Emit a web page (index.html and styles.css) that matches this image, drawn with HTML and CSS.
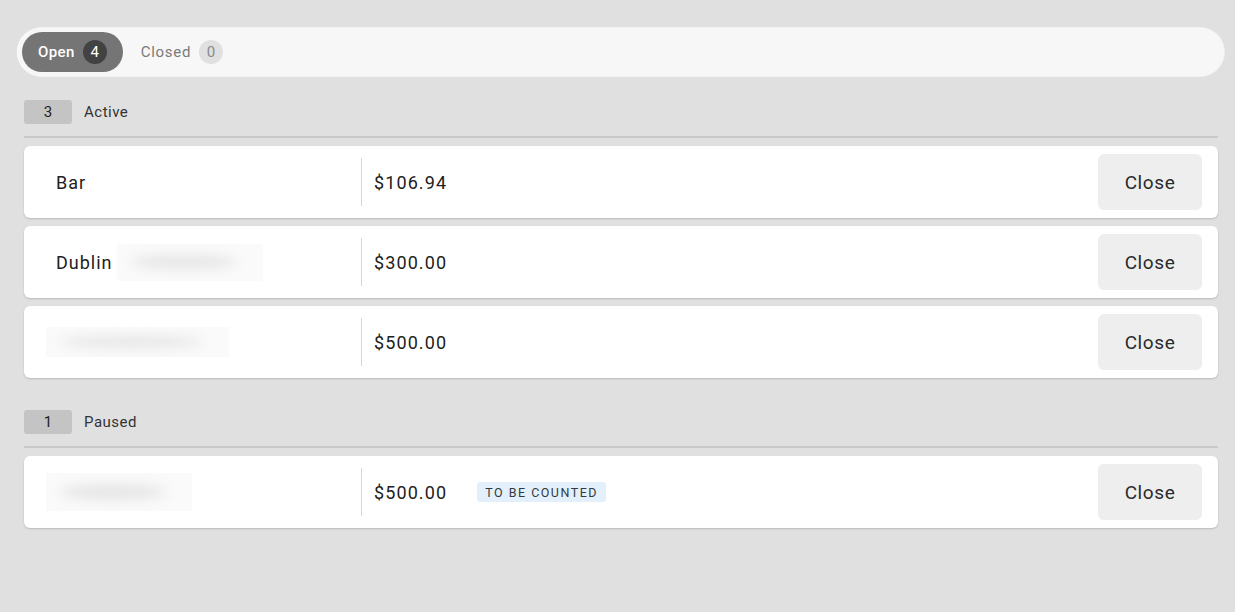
FILE: index.html
```html
<!DOCTYPE html>
<html>
<head>
<meta charset="utf-8">
<link rel="stylesheet" href="styles.css">
</head>
<body>
<div class="page">
  <div class="tabs">
    <div class="tab tab-active">Open <span class="tab-count count-dark">4</span></div>
    <div class="tab">Closed <span class="tab-count count-light">0</span></div>
  </div>

  <div class="section">
    <div class="section-head"><span class="section-count">3</span><span class="section-title">Active</span></div>
    <div class="card">
      <div class="name"><span>Bar</span></div>
      <div class="sep"></div>
      <div class="amount">$106.94</div>
      <div class="spacer"></div>
      <button class="close-btn">Close</button>
    </div>
    <div class="card">
      <div class="name"><span>Dublin</span><span class="redact redact-dublin"><span class="redact-blob"></span></span></div>
      <div class="sep"></div>
      <div class="amount">$300.00</div>
      <div class="spacer"></div>
      <button class="close-btn">Close</button>
    </div>
    <div class="card">
      <div class="name name-redacted"><span class="redact redact-wide"><span class="redact-blob"></span></span></div>
      <div class="sep"></div>
      <div class="amount">$500.00</div>
      <div class="spacer"></div>
      <button class="close-btn">Close</button>
    </div>
  </div>

  <div class="section section-second">
    <div class="section-head"><span class="section-count">1</span><span class="section-title">Paused</span></div>
    <div class="card">
      <div class="name name-redacted"><span class="redact redact-short"><span class="redact-blob"></span></span></div>
      <div class="sep"></div>
      <div class="amount">$500.00</div>
      <span class="chip">To be counted</span>
      <div class="spacer"></div>
      <button class="close-btn">Close</button>
    </div>
  </div>
</div>
</body>
</html>
```

FILE: styles.css
```css
* { box-sizing: border-box; }
html, body { margin: 0; padding: 0; }
body {
  background: #e0e0e0;
  font-family: Roboto, "Liberation Sans", Arial, sans-serif;
  color: #212121;
  width: 1235px;
  height: 612px;
  overflow: hidden;
}
.page {
  padding: 28px 11px 0 18px;
}
.tabs {
  display: flex;
  align-items: center;
  height: 48px;
  padding: 4px;
  background: #f7f7f7;
  border-radius: 24px;
  box-shadow: -1px 0 1px rgba(255,255,255,0.9), 0 0 0 1px rgba(255,255,255,0.5);
}
.tab {
  display: flex;
  align-items: center;
  height: 40px;
  padding: 0 16px 0 18px;
  font-size: 15px;
  letter-spacing: 0.7px;
  color: #7a7a7a;
  border-radius: 20px;
}
.tab-active {
  background: #757575;
  color: #ffffff;
  font-weight: 500;
  letter-spacing: 0.4px;
  padding: 0 16px;
}
.tab-count {
  display: inline-flex;
  align-items: center;
  justify-content: center;
  width: 24px;
  height: 24px;
  border-radius: 50%;
  margin-left: 8px;
  font-size: 15px;
  font-weight: 400;
  letter-spacing: 0;
}
.count-dark { background: #424242; color: #ffffff; }
.count-light { background: #e0e0e0; color: #8a8a8a; }

.section {
  margin: 24px 6px 0 6px;
}
.section-second { margin-top: 32px; }
.section-head {
  display: flex;
  align-items: center;
  height: 24px;
  position: relative;
  margin-bottom: 22px;
}
.section-head::before {
  content: "";
  position: absolute;
  left: 0; right: 0;
  top: 36px;
  height: 2px;
  background: #c9c9c9;
}
.section-count {
  display: inline-flex;
  align-items: center;
  justify-content: center;
  width: 48px;
  height: 24px;
  background: #c4c4c4;
  border-radius: 3px;
  font-size: 15px;
  color: #212121;
}
.section-title {
  margin-left: 12px;
  font-size: 15px;
  letter-spacing: 0.5px;
  color: #333333;
}

.card {
  display: flex;
  align-items: center;
  height: 72px;
  background: #ffffff;
  border-radius: 6px;
  box-shadow: 0 1px 2px rgba(0,0,0,0.18);
  padding: 0 16px 0 32px;
  margin-bottom: 8px;
}
.name {
  width: 305px;
  display: flex;
  align-items: center;
  font-size: 18px;
  letter-spacing: 1px;
  color: #212121;
}
.name-redacted { margin-left: -14px; width: 319px; }
.redact {
  display: inline-block;
  position: relative;
  overflow: hidden;
  background: #fafafa;
  height: 37px;
  margin-left: 4px;
}
.redact-dublin { width: 146px; }
.redact-wide { width: 183px; height: 30px; }
.redact-short { width: 146px; height: 38px; }
.redact-blob {
  position: absolute;
  left: 14px; right: 26px;
  top: 30%; bottom: 30%;
  background: #e6e6e6;
  border-radius: 50%;
  filter: blur(6px);
}
.sep {
  width: 1px;
  height: 48px;
  background: #d6d6d6;
}
.amount {
  margin-left: 12px;
  font-size: 18px;
  letter-spacing: 1.1px;
  color: #212121;
}
.chip {
  margin-left: 30px;
  height: 20px;
  display: inline-flex;
  align-items: center;
  padding: 0 8px;
  background: #e3f0fb;
  color: #333a40;
  border-radius: 3px;
  font-size: 12.5px;
  letter-spacing: 1.5px;
  text-transform: uppercase;
}
.spacer { flex: 1; }
.close-btn {
  width: 104px;
  height: 56px;
  border: none;
  border-radius: 6px;
  background: #eeeeee;
  font-family: Roboto, "Liberation Sans", Arial, sans-serif;
  font-size: 19px;
  font-weight: 400;
  letter-spacing: 0.6px;
  color: #2a2a2a;
}
```
